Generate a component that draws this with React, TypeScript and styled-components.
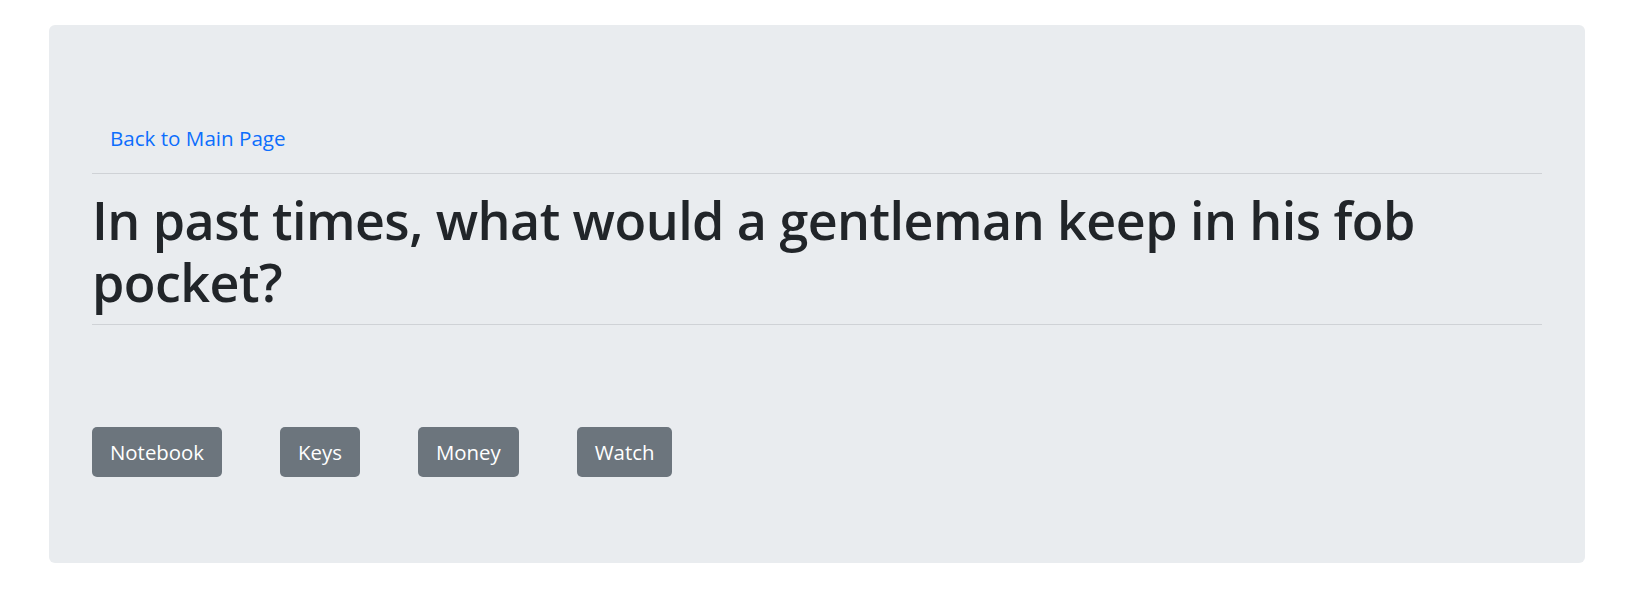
import React from "react";
import styled, { createGlobalStyle } from "styled-components";

const GlobalStyle = createGlobalStyle`
  html, body {
    margin: 0;
    padding: 0;
    background: #ffffff;
  }
  body {
    font-family: "Open Sans", "Noto Sans", "Liberation Sans", sans-serif;
    color: #212529;
  }
  * { box-sizing: border-box; }
`;

const Jumbotron = styled.div`
  margin: 25px 48px 0 49px;
  padding: 98px 43px 86px 43px;
  background: #e9ecef;
  border-radius: 6px;
  display: flex;
  flex-direction: column;
`;

const Nav = styled.nav`
  display: flex;
`;

const NavLink = styled.a`
  display: block;
  padding: 0 18px 0 18px;
  font-size: 20.6px;
  line-height: 30px;
  color: #0d6efd;
  text-decoration: none;
  cursor: pointer;
`;

const Rule = styled.hr<{ $top: number; $bottom: number }>`
  margin: ${(p) => p.$top}px 0 ${(p) => p.$bottom}px 0;
  border: 0;
  border-top: 1px solid #cfd2d6;
  height: 0;
`;

const Question = styled.h1`
  margin: 0;
  font-size: 52px;
  line-height: 62.4px;
  font-weight: 600;
  letter-spacing: -0.55px;
  color: #212529;
`;

const Answers = styled.div`
  display: flex;
  gap: 58px;
  margin-top: 102px;
`;

const AnswerButton = styled.button`
  height: 50px;
  padding: 0 18px;
  border: 0;
  border-radius: 5px;
  background: #6c757d;
  color: #ffffff;
  font-family: inherit;
  font-size: 20.4px;
  line-height: 30px;
  cursor: pointer;
`;

const answers = ["Notebook", "Keys", "Money", "Watch"];

export default function App() {
  return (
    <>
      <GlobalStyle />
      <Jumbotron>
        <Nav>
          <NavLink>Back to Main Page</NavLink>
        </Nav>
        <Rule $top={20} $bottom={15} />
        <Question>
          In past times, what would a gentleman keep in his fob pocket?
        </Question>
        <Rule $top={10} $bottom={0} />
        <Answers>
          {answers.map((a) => (
            <AnswerButton key={a}>{a}</AnswerButton>
          ))}
        </Answers>
      </Jumbotron>
    </>
  );
}
